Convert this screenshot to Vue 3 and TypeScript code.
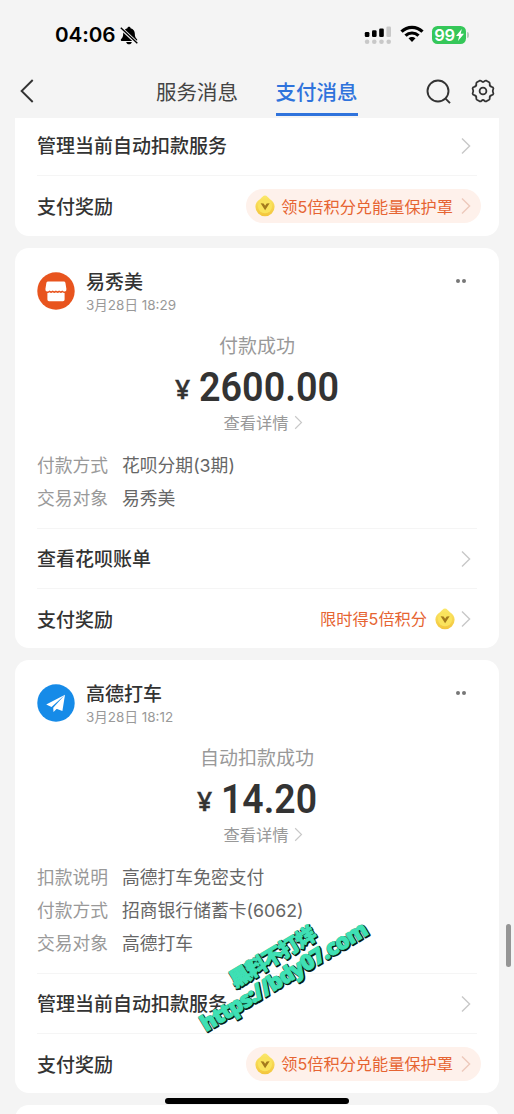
<script setup lang="ts">
interface InfoLine { label: string; value: string }
interface Bill {
  kind: 'shop' | 'plane'
  name: string
  time: string
  status: string
  amount: string
  amountWidth: number
  info: InfoLine[]
  action: string
  reward: 'pill' | 'plain'
}

const bills: Bill[] = [
  {
    kind: 'shop', name: '易秀美', time: '3月28日 18:29', status: '付款成功',
    amount: '2600.00', amountWidth: 140,
    info: [
      { label: '付款方式', value: '花呗分期(3期)' },
      { label: '交易对象', value: '易秀美' },
    ],
    action: '查看花呗账单', reward: 'plain',
  },
  {
    kind: 'plane', name: '高德打车', time: '3月28日 18:12', status: '自动扣款成功',
    amount: '14.20', amountWidth: 96,
    info: [
      { label: '扣款说明', value: '高德打车免密支付' },
      { label: '付款方式', value: '招商银行储蓄卡(6062)' },
      { label: '交易对象', value: '高德打车' },
    ],
    action: '管理当前自动扣款服务', reward: 'pill',
  },
]
</script>

<template>
  <div class="screen">
    <svg class="defs" width="0" height="0">
      <defs>
        <linearGradient id="coinFill" x1="0" y1="0" x2="0" y2="1">
          <stop offset="0" stop-color="#fbe86a" />
          <stop offset="1" stop-color="#f3c53c" />
        </linearGradient>
        <symbol id="coin" viewBox="0 0 20 22">
          <path d="M10 .6C12 .6 12.800 2.600 15 4.200 18 6.200 19.600 8.500 19.600 11.800A9.600 9.400 0 0 1 .4 11.800C.4 8.500 2 6.200 5 4.200 7.200 2.600 8 .6 10 .6Z" fill="url(#coinFill)" />
          <circle cx="10" cy="11.300" r="7" fill="#fae35c" />
          <path d="M5.600 8.300l3 .2 1.500 2.300 1.600-2.300 2.900-.2-4.500 6.900z" fill="#a47a1c" />
        </symbol>
        <symbol id="arrow" viewBox="0 0 10 18">
          <path d="M1 1.500 8.600 9 1 16.500" fill="none" stroke="currentColor" stroke-width="1.400" />
        </symbol>
      </defs>
    </svg>

    <header class="top">
      <div class="statusbar">
        <span class="clock">04:06</span>
        <svg class="bell" viewBox="0 0 18 19">
          <path d="M9 .8c.9 0 1.500.6 1.600 1.400 2.700.7 4.200 2.700 4.200 5.200 0 3.300 1 4.600 2.200 5.800.5.6.2 1.700-.6 1.700H1.600c-.8 0-1.100-1.100-.6-1.700 1.200-1.200 2.200-2.500 2.200-5.800 0-2.500 1.500-4.500 4.200-5.200C7.500 1.400 8.100.8 9 .8ZM6.200 15.900h5.600c-.3 1.400-1.400 2.300-2.800 2.300s-2.500-.9-2.800-2.300Z" />
          <path d="M1 2.200 17.300 17.400" stroke="#f4f4f4" stroke-width="3.400" />
          <path d="M.8 1.800 17.300 17.200" stroke="#000" stroke-width="1.400" />
        </svg>
        <svg class="signal" viewBox="0 0 28 19">
          <g fill="#000">
            <rect x=".8" y="6" width="4.600" height="5" rx="1.300" />
            <rect x="8" y="4.300" width="4.600" height="6.700" rx="1.300" />
            <rect x="15.200" y="2.500" width="4.600" height="8.500" rx="1.300" />
          </g>
          <g fill="#c8c8c8">
            <rect x="22.400" y=".5" width="4.600" height="10.500" rx="1.300" />
            <circle cx="3.100" cy="15.800" r="2.300" /><circle cx="10.300" cy="15.800" r="2.300" />
            <circle cx="17.500" cy="15.800" r="2.300" /><circle cx="24.700" cy="15.800" r="2.300" />
          </g>
        </svg>
        <svg class="wifi" viewBox="0 0 24 18">
          <g fill="none" stroke="#000" stroke-width="3.200">
            <path d="M1.500 6.700C7.400.8 16.600.8 22.500 6.700" />
            <path d="M5.500 10.700c3.700-3.600 9.300-3.600 13 0" />
          </g>
          <path d="M8.500 13.300c2-1.900 5-1.900 7 0L12 17z" />
        </svg>
        <span class="battery">99<svg viewBox="0 0 8 12"><path d="M5.800 0 0 6.900h3.100L2 12l6-7.200H4.700z" fill="#fff" /></svg></span>
        <span class="nub"></span>
      </div>
      <nav class="tabs">
        <svg class="back" viewBox="0 0 14 24"><path d="M12.700 1 1.600 12l11.100 11" fill="none" stroke="#333" stroke-width="1.900" /></svg>
        <span class="tab">服务消息</span>
        <span class="tab active">支付消息</span>
        <svg class="search" viewBox="0 0 26 26"><g fill="none" stroke="#333" stroke-width="1.900"><circle cx="12" cy="12" r="10.500" /><path d="m19.300 19.300 4.700 4.800" /></g></svg>
        <svg class="gear" viewBox="0 0 24 24">
          <g fill="none" stroke="#333" stroke-width="1.800" stroke-linejoin="round">
            <path d="M8.600 1.700Q9.600 1.300 10.400 2.200Q12 3.700 13.600 2.200Q14.400 1.300 15.400 1.700L18.100 3.200Q19 3.800 18.700 5Q18.400 7.300 20.800 7.900Q22.200 8.200 22.400 9.300Q21 12 22.400 14.700Q22.200 15.800 20.800 16.100Q18.400 16.700 18.700 19Q19 20.200 18.100 20.800L15.400 22.300Q14.400 22.700 13.600 21.800Q12 20.300 10.400 21.800Q9.600 22.700 8.600 22.300L5.900 20.800Q5 20.200 5.300 19Q5.600 16.700 3.200 16.100Q1.800 15.800 1.600 14.700Q3 12 1.600 9.300Q1.800 8.200 3.200 7.900Q5.600 7.300 5.300 5Q5 3.800 5.900 3.200Z" />
            <circle cx="12" cy="12" r="3.400" />
          </g>
        </svg>
      </nav>
    </header>

    <main class="feed">
      <section class="card first">
        <div class="row short"><b>管理当前自动扣款服务</b><svg class="arrow"><use href="#arrow" /></svg></div>
        <div class="row line tall">
          <b>支付奖励</b>
          <span class="pill"><svg class="coin"><use href="#coin" /></svg><em>领5倍积分兑能量保护罩</em><svg class="arrow"><use href="#arrow" /></svg></span>
        </div>
      </section>

      <section v-for="bill in bills" :key="bill.name" class="card">
        <div class="head">
          <svg v-if="bill.kind === 'shop'" class="avatar" viewBox="0 0 38 38">
            <circle cx="19" cy="19" r="18.700" fill="#e8541e" />
            <path d="M11.200 9.400h15.600q1.300 0 1.600 1.300l1 6.200q.2 2.200-1.400 2.500-1.600.3-2.700-1-1.600 1.600-3.200 0-1.600 1.600-3.200 0-1.600 1.600-3.200 0-1.600 1.600-3.200 0-1.100 1.300-2.700 1-1.600-.3-1.400-2.500l1-6.200q.3-1.300 1.800-1.300Z" fill="#fff" />
            <path d="M10.400 21q1.200.2 2.100-.8 1.600 1.400 3.200 0 1.700 1.400 3.300 0 1.600 1.400 3.300 0 1.600 1.400 3.200 0 .9 1 2.100.8v6.600q0 1.600-1.600 1.600H12q-1.600 0-1.600-1.600Z" fill="#fff" />
          </svg>
          <svg v-else class="avatar" viewBox="0 0 38 38">
            <circle cx="19" cy="19" r="18.700" fill="#168be8" />
            <path d="M28 10.800 9.200 20.600l5.300 2.500zM28 10.800l-11.800 13 .3 4.300 3-3.100zM28 10.800l-9.300 13.700 6.700 2.500z" fill="#fff" />
          </svg>
          <div class="who"><strong>{{ bill.name }}</strong><time>{{ bill.time }}</time></div>
          <span class="more"><i></i><i></i></span>
        </div>
        <div class="status">{{ bill.status }}</div>
        <div class="amount">
          <span class="yen">¥</span>
          <svg :width="bill.amountWidth" height="40">
            <text x="0" y="34.500" :textLength="bill.amountWidth" lengthAdjust="spacingAndGlyphs">{{ bill.amount }}</text>
          </svg>
        </div>
        <div class="detail">查看详情<svg><use href="#arrow" /></svg></div>
        <dl>
          <div v-for="line in bill.info" :key="line.label"><dt>{{ line.label }}</dt><dd>{{ line.value }}</dd></div>
        </dl>
        <div class="row line"><b>{{ bill.action }}</b><svg class="arrow"><use href="#arrow" /></svg></div>
        <div class="row line last">
          <b>支付奖励</b>
          <span v-if="bill.reward === 'pill'" class="pill"><svg class="coin"><use href="#coin" /></svg><em>领5倍积分兑能量保护罩</em><svg class="arrow"><use href="#arrow" /></svg></span>
          <span v-else class="plain"><em>限时得5倍积分</em><svg class="coin"><use href="#coin" /></svg><svg class="arrow"><use href="#arrow" /></svg></span>
        </div>
      </section>
      <section class="card next"></section>
    </main>

    <div class="scrollbar"></div>
    <div class="home"></div>
    <svg class="stamp" viewBox="0 0 220 140">
      <g class="shadow" transform="translate(.8 .8)">
        <text transform="translate(55 78) rotate(-31)" font-size="20.500" textLength="97">黑料不打烊</text>
        <text transform="translate(26 122) rotate(-31)" font-size="22" textLength="191">https://bdy07.com</text>
      </g>
      <g class="ink">
        <text transform="translate(55 78) rotate(-31)" font-size="20.500" textLength="97">黑料不打烊</text>
        <text transform="translate(26 122) rotate(-31)" font-size="22" textLength="191">https://bdy07.com</text>
      </g>
    </svg>
  </div>
</template>

<style>
body { background: #f4f4f4; }
</style>

<style scoped>
.screen { position: relative; width: 514px; height: 1114px; overflow: hidden; background: #f4f4f4; color: #333; font-family: Inter, "Noto Sans CJK SC", sans-serif; }
.defs { position: absolute; }
svg { display: block; flex: none; }
em, i { font-style: normal; }
.top { height: 118px; }
.statusbar { display: flex; align-items: center; height: 70px; padding-left: 55px; box-sizing: border-box; }
.clock { width: 61px; font: 600 20.700px/24px Inter, sans-serif; letter-spacing: -.1px; color: #000; white-space: nowrap; }
.bell { width: 18px; height: 19px; margin-left: 4px; }
.signal { width: 28px; height: 19px; margin-left: 226px; }
.wifi { width: 24px; height: 18px; margin: 0 0 2px 8px; }
.battery { display: flex; align-items: center; justify-content: center; width: 34px; height: 18px; margin-left: 8px; border-radius: 5.500px; background: #35c759; color: #fff; font: 600 16.500px/18px Inter, sans-serif; letter-spacing: -.4px; }
.battery svg { width: 8px; height: 12px; margin-left: 1px; }
.nub { width: 2px; height: 6px; margin-left: 1px; border-radius: 0 2px 2px 0; background: #b9c9bd; }
.tabs { display: flex; align-items: center; height: 46px; padding-left: 20px; }
.back { width: 14px; height: 24px; margin-right: 122px; margin-top: -4px; }
.tab { display: flex; align-items: center; justify-content: center; width: 82px; height: 46px; padding-top: 2px; box-sizing: border-box; border-bottom: 3px solid transparent; font-size: 20.500px; line-height: 30px; white-space: nowrap; color: #444; }
.tab.active { margin-left: 37.500px; border-color: #2f73dc; color: #2f73dc; font-weight: 500; }
.search { width: 26px; height: 26px; margin: -3px 0 0 68px; }
.gear { width: 24px; height: 24px; margin: -4px 0 0 19px; }
.feed { display: flex; flex-direction: column; gap: 12px; padding: 0 15px; }
.card { flex: none; background: #fff; border-radius: 14px; padding: 24px 22px 0; }
.card.first { padding-top: 0; border-radius: 0 0 14px 14px; }
.card.next { height: 30px; padding: 0; }
.row { display: flex; align-items: center; justify-content: space-between; height: 60px; box-sizing: border-box; }
.row.short { height: 57px; padding-bottom: 1px; }
.row.tall { height: 61px; }
.row.line { border-top: 1px solid #f5f5f5; }
.row b { padding-top: 2px; font-weight: 500; font-size: 19px; line-height: 28px; }
.row.tall b, .row.last b { padding-top: 4px; }
.arrow { width: 10px; height: 18px; margin-right: 6px; color: #c8c8c8; }
.pill { display: flex; align-items: center; height: 34px; margin-right: -4px; padding-left: 9px; border-radius: 17px; background: #fef1eb; }
.coin { width: 20px; height: 22px; }
.pill em { margin: 0 8px 0 6px; }
.pill .arrow { margin-right: 10px; color: #edc9bb; }
em { padding-top: 1px; font-size: 16.200px; line-height: 24px; color: #e66432; white-space: nowrap; }
.plain { display: flex; align-items: center; }
.plain .coin { margin: 0 6px 0 8px; }
.head { display: flex; height: 38px; }
.avatar { width: 38px; height: 38px; margin-left: -.5px; }
.who { display: flex; flex-direction: column; margin: -3px 0 0 11.500px; }
.who strong { font-weight: 500; font-size: 19px; line-height: 28px; }
.who time { margin-top: -1px; font-size: 13.500px; line-height: 18px; color: #999; white-space: nowrap; }
.more { display: flex; gap: 2.500px; margin: 7px 11px 0 auto; }
.more i { width: 4px; height: 4px; border-radius: 50%; background: #777; }
.status { height: 30px; margin-top: 20px; padding-top: 2px; box-sizing: border-box; text-align: center; font-size: 19px; line-height: 30px; color: #999; }
.amount { display: flex; justify-content: center; height: 52px; padding-top: 6px; box-sizing: border-box; }
.amount svg { overflow: visible; }
.amount text { font: 600 41px Roboto, sans-serif; fill: #333; }
.yen { margin: 6px 9px 0 0; font: 600 26.500px/34px "Open Sans", sans-serif; -webkit-text-stroke: .4px #333; }
.detail { display: flex; align-items: center; justify-content: center; height: 20px; margin-bottom: 2px; padding-left: 12px; font-size: 16.300px; color: #999; }
.detail svg { width: 9px; height: 15px; margin-left: 5px; color: #c8c8c8; }
dl { margin: 0; padding: 15px 0 13px; }
dl div { display: flex; height: 33px; align-items: center; font-size: 17.800px; line-height: 26px; }
dt { width: 85px; color: #999; }
dd { margin: 0; color: #666; white-space: nowrap; }
.scrollbar { position: absolute; left: 506px; top: 924px; width: 5px; height: 43px; border-radius: 3px; background: #959595; }
.home { position: absolute; left: 165px; top: 1098px; width: 184px; height: 6px; border-radius: 3px; background: #000; }
.stamp { position: absolute; left: 180px; top: 910px; width: 220px; height: 140px; overflow: visible; }
.stamp text { font-family: "Open Sans", "Noto Sans CJK SC", sans-serif; font-weight: 800; stroke-linejoin: round; }
.shadow text { fill: #061a16; stroke: #061a16; stroke-width: 2.400px; }
.ink text { fill: #3fe0b4; stroke: #3fe0b4; stroke-width: 1px; }
</style>
